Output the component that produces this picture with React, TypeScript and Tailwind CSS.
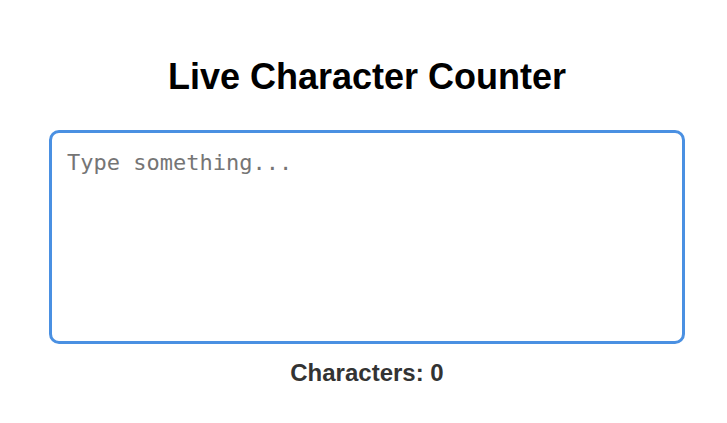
import React, { useState } from "react";

export default function App() {
  const [text, setText] = useState("");
  return (
    <div className="min-h-[423px] w-full bg-white" style={{ fontFamily: '"Liberation Sans", Arial, sans-serif' }}>
      <div className="pl-[49px] pr-[42px] pt-[57px]">
        <h1 className="m-0 text-center text-[36px] font-bold leading-[40px] text-black">
          Live Character Counter
        </h1>
        <textarea
          value={text}
          onChange={(e) => setText(e.target.value)}
          placeholder="Type something..."
          className="mt-[33px] block h-[214px] w-full resize-none rounded-[10px] border-[3px] border-[#4a90e2] px-[15px] py-[14px] text-[22px] leading-[32px] text-black outline-none placeholder:text-[#757575]"
          style={{ fontFamily: '"DejaVu Sans Mono", monospace' }}
        />
        <p className="m-0 mt-[16px] text-center text-[24px] font-bold leading-[26px] text-[#333333]">
          Characters: {text.length}
        </p>
      </div>
    </div>
  );
}
